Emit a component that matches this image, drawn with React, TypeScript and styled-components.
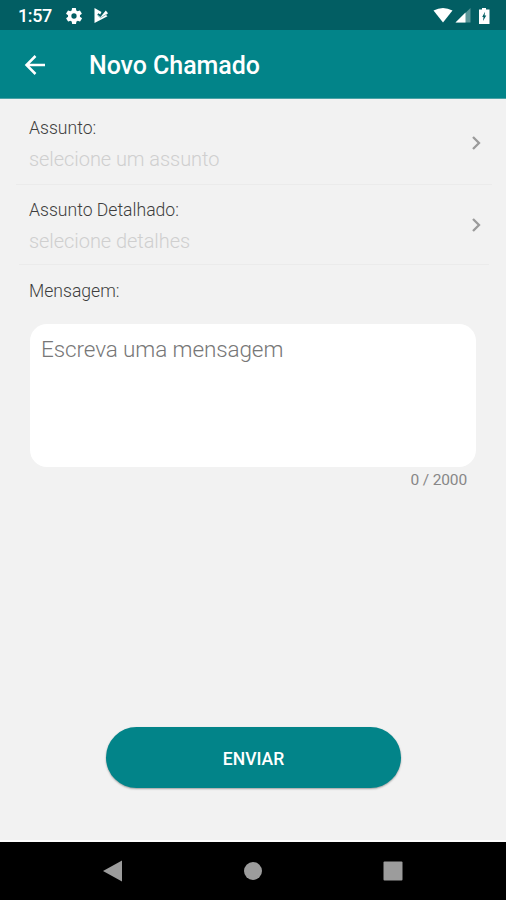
import React from "react";
import styled, { createGlobalStyle } from "styled-components";

const Global = createGlobalStyle`
  * { box-sizing: border-box; }
  body { margin: 0; background: #f2f2f2; font-family: Roboto, "Liberation Sans", sans-serif; }
`;

const Screen = styled.div`
  display: flex;
  flex-direction: column;
  width: 506px;
  height: 900px;
  overflow: hidden;
  background: #f2f2f2;
`;

const StatusBar = styled.div`
  display: flex;
  align-items: center;
  height: 30px;
  padding: 1px 15px 0 18px;
  background: #025e63;
  color: #fff;
`;

const Clock = styled.span`
  width: 48px;
  padding-top: 1px;
  font-size: 18px;
  font-weight: 500;
  line-height: 22px;
  letter-spacing: -0.4px;
`;

const Notices = styled.div`
  display: flex;
  align-items: center;
  gap: 11px;
`;

const Signals = styled.div`
  display: flex;
  align-items: center;
  margin-left: auto;
`;

const Icon = styled.svg`
  display: block;
  flex: none;
`;

const AppBar = styled.header`
  display: flex;
  align-items: center;
  height: 69px;
  padding: 2px 24px 0;
  background: #028489;
  border-bottom: 1px solid #4ba2a6;
  color: #fff;
`;

const BackButton = styled.button`
  display: flex;
  width: 65px;
  padding: 0;
  border: 0;
  background: none;
  color: inherit;
`;

const Title = styled.h1`
  margin: 2px 0 0;
  font-size: 25px;
  font-weight: 500;
  line-height: 30px;
  letter-spacing: -0.06px;
`;

const Form = styled.main`
  flex: 1;
  display: flex;
  flex-direction: column;
  border-bottom: 2px solid #fff;
`;

const Row = styled.div<{ $height: number; $inset: number; $top: number }>`
  display: flex;
  align-items: center;
  justify-content: space-between;
  height: ${(p) => p.$height}px;
  margin: 0 ${(p) => p.$inset - 2}px 0 ${(p) => p.$inset}px;
  padding: ${(p) => p.$top}px ${(p) => 26 - p.$inset}px 0 ${(p) => 29 - p.$inset}px;
  border-bottom: 1px solid #ebebeb;
`;

const RowText = styled.div`
  margin-top: 2px;
`;

const Label = styled.div`
  font-size: 17.6px;
  line-height: 22px;
  color: #3e3e3e;
  font-weight: 300;
`;

const Value = styled.div`
  margin-top: 9px;
  font-size: 20px;
  font-weight: 300;
  line-height: 23px;
  color: #cfcfcf;
  letter-spacing: -0.06px;
`;

const MessageHead = styled.div`
  padding: 15px 29px 22px;
`;

const Message = styled.textarea`
  display: block;
  width: 446px;
  height: 143px;
  margin-left: 30px;
  padding: 11px 11px;
  border: 0;
  border-radius: 17px;
  outline: 0;
  resize: none;
  background: #fff;
  font: 300 22.5px/28px Roboto, "Liberation Sans", sans-serif;
  letter-spacing: -0.1px;
  &::placeholder { color: #777; opacity: 1; }
`;

const Counter = styled.div`
  margin: 3px 39px 0 0;
  text-align: right;
  font-size: 15.5px;
  line-height: 21px;
  letter-spacing: -0.15px;
  color: #878787;
`;

const Submit = styled.button`
  width: 295px;
  height: 61px;
  margin: auto auto 52px 106px;
  padding: 2px 0 0;
  border: 0;
  border-radius: 31px;
  background: #028489;
  box-shadow: 0 1px 2px rgba(0, 0, 0, 0.35);
  color: #fff;
  font: 500 17.5px/22px Roboto, "Liberation Sans", sans-serif;
`;

const NavBar = styled.nav`
  display: grid;
  grid-template-columns: repeat(3, 140px);
  justify-content: center;
  align-items: center;
  justify-items: center;
  height: 58px;
  background: #000;
  color: #9c9c9c;
`;

const Chevron = () => (
  <Icon width="12" height="18" viewBox="0 0 12 18" fill="none" stroke="#9b9b9b" strokeWidth="2.3">
    <path d="M3 3l6 6-6 6" />
  </Icon>
);

export default function App() {
  return (
    <>
      <Global />
      <Screen>
        <StatusBar>
          <Clock>1:57</Clock>
          <Notices>
            <Icon width="16" height="16" viewBox="2 2 20 20" fill="#fff">
              <path d="M19.4 13a7.5 7.5 0 0 0 0-2l2.1-1.6a.5.5 0 0 0 .1-.7l-2-3.4a.5.5 0 0 0-.6-.2l-2.5 1a7.3 7.3 0 0 0-1.7-1l-.4-2.7A.5.5 0 0 0 14 2h-4a.5.5 0 0 0-.5.4l-.4 2.7a7.3 7.3 0 0 0-1.7 1l-2.5-1a.5.5 0 0 0-.6.2l-2 3.4a.5.5 0 0 0 .1.7L4.600 11a7.500 7.500 0 0 0 0 2l-2.100 1.600a.5.5 0 0 0-.1.700l2 3.400c.1.200.4.300.6.200l2.500-1a7.300 7.300 0 0 0 1.700 1l.4 2.700c0 .2.2.4.5.4h4c.2 0 .5-.2.5-.4l.4-2.700a7.300 7.300 0 0 0 1.700-1l2.500 1c.2.1.5 0 .6-.2l2-3.400a.5.5 0 0 0-.1-.700zM12 15.300a3.300 3.300 0 1 1 0-6.600 3.300 3.300 0 0 1 0 6.600z" />
            </Icon>
            <Icon width="16" height="17" viewBox="0 0 16 17">
              <path d="M1.500 1L8.500 5 7.200 7.500 5.500 6.200 4.300 7.500 7.500 10 12.800 3.600 15 6.300 13 8 14.500 9.200 1.500 16z" fill="#fff" />
              <path d="M4.500 8.200L7.500 10.800 13.500 7.300" fill="none" stroke="#025e63" strokeWidth=".45" />
            </Icon>
          </Notices>
          <Signals>
            <Icon width="22" height="17" viewBox="0 0 22 17">
              <path d="M.5 3.500Q10-1.500 19.500 3.500L10 15.500z" fill="#fff" />
            </Icon>
            <Icon width="17" height="17" viewBox="0 0 17 17">
              <path d="M15.500 1v14.500H.5z" fill="#fff" opacity=".35" />
              <path d="M10.500 5.500v10H.5z" fill="#fff" />
            </Icon>
            <Icon width="19" height="18" viewBox="0 0 19 18">
              <path d="M10 1h4v1.500H17.500V17H7V2.500h3z" fill="#fff" />
              <path d="M13 4.800l-2.800 5.200H11.500l-.5 4 3.300-5.500h-1.700z" fill="#025e63" />
            </Icon>
          </Signals>
        </StatusBar>
        <AppBar>
          <BackButton aria-label="Voltar">
            <Icon width="22" height="22" viewBox="0 0 22 22" fill="none" stroke="#fff" strokeWidth="2.500">
              <path d="M21 11H3M11.500 2L2.500 11l9 9" />
            </Icon>
          </BackButton>
          <Title>Novo Chamado</Title>
        </AppBar>
        <Form>
          <Row $height={86} $inset={16} $top={3}>
            <RowText>
              <Label>Assunto:</Label>
              <Value>selecione um assunto</Value>
            </RowText>
            <Chevron />
          </Row>
          <Row $height={80} $inset={19} $top={0}>
            <RowText>
              <Label>Assunto Detalhado:</Label>
              <Value>selecione detalhes</Value>
            </RowText>
            <Chevron />
          </Row>
          <MessageHead>
            <Label>Mensagem:</Label>
          </MessageHead>
          <Message placeholder="Escreva uma mensagem" />
          <Counter>0 / 2000</Counter>
          <Submit>ENVIAR</Submit>
        </Form>
        <NavBar>
          <Icon width="20" height="22" viewBox="0 0 20 22" fill="currentColor">
            <path d="M0 11L19 .5v21z" />
          </Icon>
          <Icon width="18" height="18" viewBox="0 0 18 18" fill="currentColor">
            <circle cx="9" cy="9" r="9" />
          </Icon>
          <Icon width="20" height="20" viewBox="0 0 20 20" fill="currentColor">
            <rect x=".5" y=".5" width="19" height="19" rx="1" />
          </Icon>
        </NavBar>
      </Screen>
    </>
  );
}
